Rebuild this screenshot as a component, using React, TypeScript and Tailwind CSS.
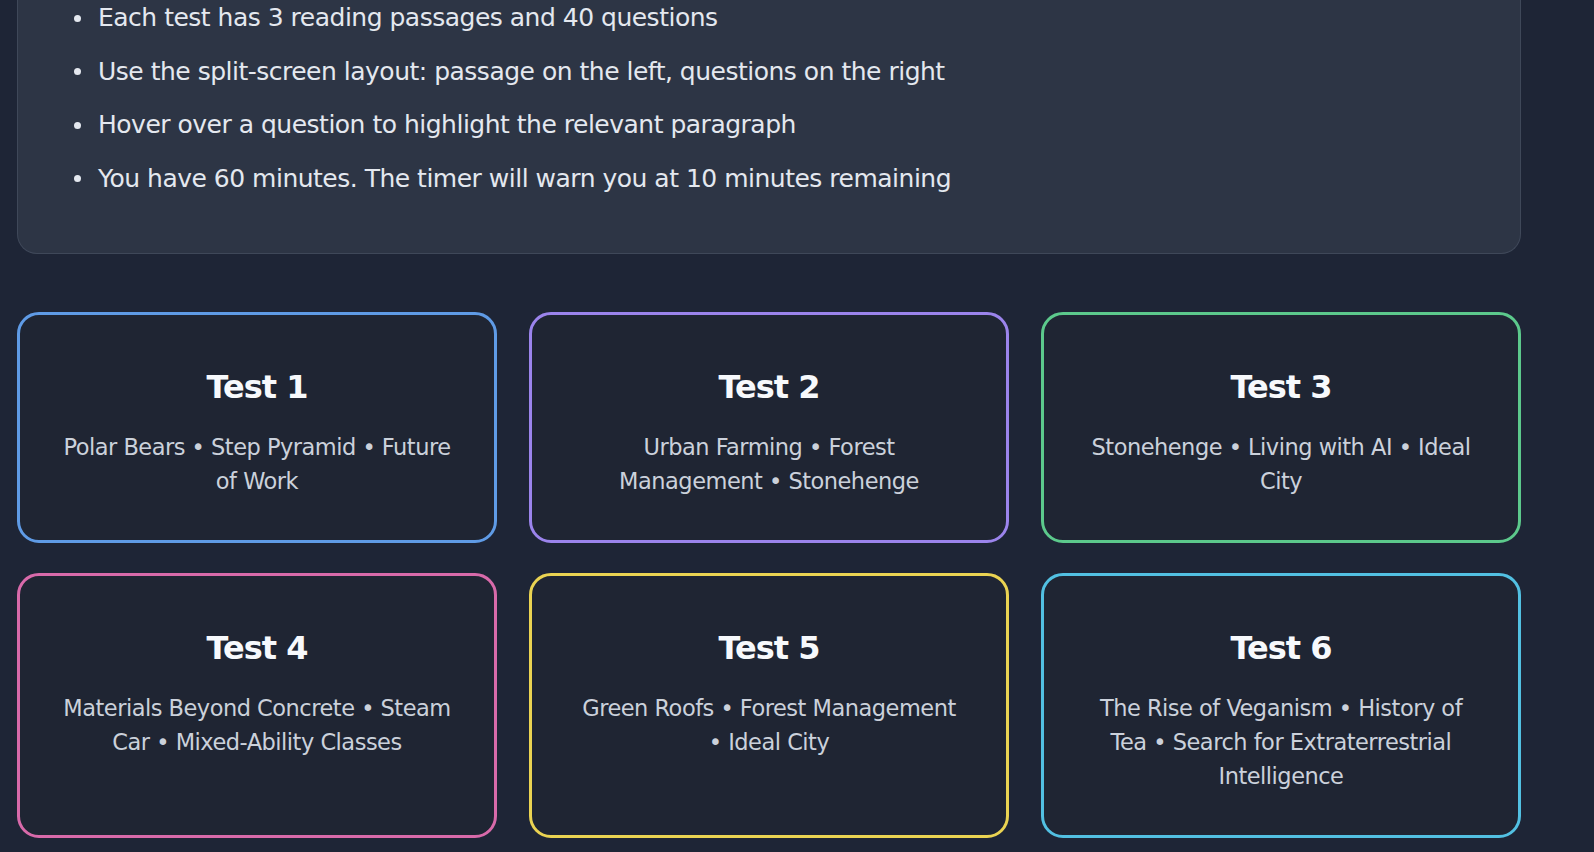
const tips = [
  'Each test has 3 reading passages and 40 questions',
  'Use the split-screen layout: passage on the left, questions on the right',
  'Hover over a question to highlight the relevant paragraph',
  'You have 60 minutes. The timer will warn you at 10 minutes remaining',
]

type Test = {
  id: number
  topics: string
  border: string
}

const tests: Test[] = [
  { id: 1, topics: 'Polar Bears • Step Pyramid • Future of Work', border: 'border-[#5f9be6]' },
  { id: 2, topics: 'Urban Farming • Forest Management • Stonehenge', border: 'border-[#9b84ec]' },
  { id: 3, topics: 'Stonehenge • Living with AI • Ideal City', border: 'border-[#5cc98c]' },
  { id: 4, topics: 'Materials Beyond Concrete • Steam Car • Mixed-Ability Classes', border: 'border-[#d86aaa]' },
  { id: 5, topics: 'Green Roofs • Forest Management • Ideal City', border: 'border-[#ead352]' },
  { id: 6, topics: 'The Rise of Veganism • History of Tea • Search for Extraterrestrial Intelligence', border: 'border-[#52c0e2]' },
]

function TestCard({ test }: { test: Test }) {
  return (
    <button
      type="button"
      className={`flex flex-col items-center rounded-[22px] border-[3px] ${test.border} bg-[#1f2533] px-[42px] pt-[52px] pb-[42px] text-center`}
    >
      <h3 className="text-[32px] font-bold leading-[40px] tracking-[-1px] text-[#f7f9fc]">
        Test {test.id}
      </h3>
      <p className="mt-[23px] text-[22.5px] leading-[34px] tracking-[-0.5px] text-[#cbd1db]">
        {test.topics}
      </p>
    </button>
  )
}

export default function App() {
  return (
    <div
      className="h-[852px] overflow-hidden bg-[#1e2536]"
      style={{ fontFamily: '"DejaVu Sans", Verdana, sans-serif' }}
    >
      <div className="ml-[17px] w-[1504px]">
        <section className="rounded-b-[20px] border border-t-0 border-[#3f4859] bg-[#2d3545] pb-[56px]">
          <ul className="flex flex-col gap-[17.5px] pl-[56px]">
            {tips.map((tip) => (
              <li
                key={tip}
                className="flex items-center gap-[17px] text-[25px] leading-[36px] tracking-[-0.5px] text-[#e4e8ef]"
              >
                <span className="h-[7px] w-[7px] shrink-0 rounded-full bg-[#e4e8ef]" />
                {tip}
              </li>
            ))}
          </ul>
        </section>

        <div className="mt-[58px] grid grid-cols-3 gap-x-[32px] gap-y-[30px]">
          {tests.map((t) => (
            <TestCard key={t.id} test={t} />
          ))}
        </div>
      </div>
    </div>
  )
}
